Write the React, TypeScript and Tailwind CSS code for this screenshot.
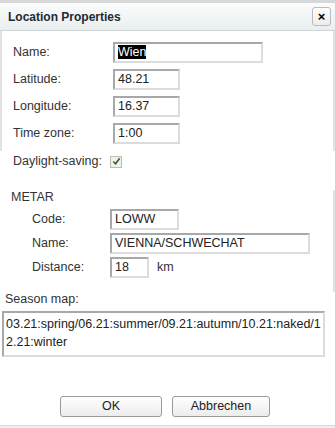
import type { JSX } from 'react'

const inputCls =
  "h-[21px] border-2 border-t-[#a8a8a8] border-l-[#a8a8a8] border-b-[#dcdcdc] border-r-[#dcdcdc] bg-white px-[3px] text-[12.5px] leading-[17px] text-[#222]"

interface IRowProps {
  label: string;
  value: string;
  width: string;
  selected?: boolean;
}

const Row = ({ label, value, width, selected }: IRowProps): JSX.Element => (
  <div className="flex h-[27px] items-center">
    <span className="w-[111px] pl-[11px] text-[12.5px] text-[#333]">{label}</span>
    <div className={`${inputCls} ${width}`}>
      {selected ? <span className="bg-black text-white">{value}</span> : value}
    </div>
  </div>
)

const MetarRow = ({ label, value, width }: IRowProps): JSX.Element => (
  <div className="flex h-[24px] items-center">
    <span className="w-[110px] pl-[32px] text-[12.5px] text-[#333]">{label}</span>
    <div className={`${inputCls} ${width}`}>{value}</div>
  </div>
)

const App = (): JSX.Element => (
  <div
    className="flex h-[428px] w-[335px] flex-col overflow-hidden bg-white"
    style={{ fontFamily: '"Liberation Sans", Arial, sans-serif' }}
  >
    <div className="h-[3px] bg-[#d6d9d8]"></div>
    {/* title bar */}
    <div className="flex h-[28px] items-center justify-between border-b border-[#cfd6d8] bg-gradient-to-b from-[#fbfcfc] to-[#e9eeef] pl-[8px] pr-[4px]">
      <span className="text-[12px] font-bold text-[#1c2a35]">Location Properties</span>
      <div className="flex h-[19px] w-[19px] items-center justify-center rounded-[3px] border border-[#b9bcbc] bg-gradient-to-b from-white to-[#ececec] text-[13px] font-bold leading-none text-black">
        ×
      </div>
    </div>

    {/* location panel */}
    <div className="flex flex-col border-x-2 border-[#e2e2e2] pt-[8px] pb-[4px]">
      <Row label="Name:" value="Wien" width="w-[150px]" selected />
      <Row label="Latitude:" value="48.21" width="w-[67px]" />
      <Row label="Longitude:" value="16.37" width="w-[67px]" />
      <Row label="Time zone:" value="1:00" width="w-[67px]" />
    </div>

    <div className="flex h-[21px] items-center">
      <span className="w-[110px] pl-[13px] text-[12.5px] text-[#333]">Daylight-saving:</span>
      <div className="flex h-[12px] w-[12px] items-center justify-center border border-[#b8c0b0] bg-[#eef2ea]">
        <svg viewBox="0 0 10 10" className="h-[9px] w-[9px]">
          <path d="M1.5 5 L4 7.5 L8.5 1.5" fill="none" stroke="#3f5a2a" strokeWidth="1.8" />
        </svg>
      </div>
    </div>

    {/* METAR */}
    <div className="mt-[18px] flex flex-col border-r-2 border-[#e2e2e2] pb-[13px]">
      <span className="pl-[11px] text-[12.5px] leading-[14px] text-[#333]">METAR</span>
      <div className="mt-[3px] flex flex-col">
        <MetarRow label="Code:" value="LOWW" width="w-[69px]" />
        <MetarRow label="Name:" value="VIENNA/SCHWECHAT" width="w-[200px]" />
        <div className="flex h-[24px] items-center">
          <span className="w-[110px] pl-[32px] text-[12.5px] text-[#333]">Distance:</span>
          <div className={`${inputCls} w-[39px]`}>18</div>
          <span className="pl-[8px] text-[12.5px] text-[#333]">km</span>
        </div>
      </div>
    </div>

    {/* season map */}
    <div className="flex flex-col px-[2px]">
      <span className="pl-[3px] text-[12.5px] leading-[14px] text-[#333]">Season map:</span>
      <div className="mt-[5px] h-[46px] w-[323px] break-all border-2 border-t-[#a8a8a8] border-l-[#a8a8a8] border-b-[#dcdcdc] border-r-[#dcdcdc] px-[2px] pt-[2px] text-[12.5px] leading-[18px] text-[#222]">
        03.21:spring/06.21:summer/09.21:autumn/10.21:naked/12.21:winter
      </div>
    </div>

    <div className="flex-1"></div>

    <div className="flex gap-[10px] pl-[60px] pb-[8px]">
      <button className="h-[21px] w-[102px] rounded-[3px] border border-[#9a9a9a] bg-gradient-to-b from-white to-[#ececec] text-[12.5px] text-[#222]">
        OK
      </button>
      <button className="h-[21px] w-[98px] rounded-[3px] border border-[#9a9a9a] bg-gradient-to-b from-white to-[#ececec] text-[12.5px] text-[#222]">
        Abbrechen
      </button>
    </div>
    <div className="h-[3px] border-t border-[#d8d8d8] bg-[#f0f0f0]"></div>
  </div>
)

export default App
